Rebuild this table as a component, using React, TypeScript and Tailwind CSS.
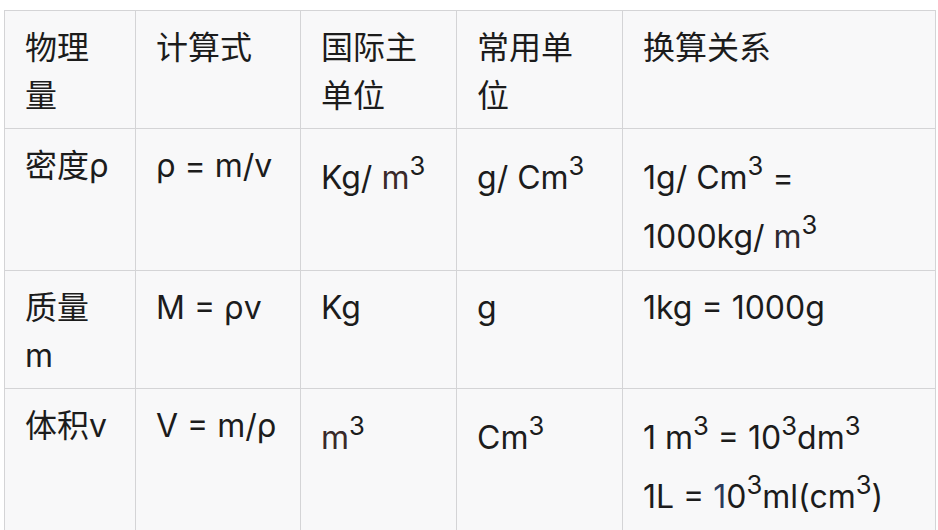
import React from "react";

const cell = "border border-[#d4d4d6] align-top pl-[20px] pr-[10px] whitespace-nowrap";
const plain = "pt-[13px] leading-[48px]";
const tall = "pt-[19px] leading-[59px]";

function Sup({ children }: { children: React.ReactNode }) {
  return <sup className="text-[80%] -top-[0.55em]">{children}</sup>;
}

export default function App() {
  return (
    <div className="min-h-screen bg-white pt-[10px] pl-[4px] text-[#1c1c1c] text-[32px] font-['Inter','Noto_Sans_CJK_SC',sans-serif] overflow-hidden">
      <table className="table-fixed border-collapse bg-[#f8f8f9] w-[931px]">
        <colgroup>
          <col className="w-[131px]" />
          <col className="w-[165px]" />
          <col className="w-[156px]" />
          <col className="w-[166px]" />
          <col className="w-[313px]" />
        </colgroup>
        <tbody>
          <tr className="h-[118px]">
            <td className={`${cell} ${plain}`}>
              物理
              <br />量
            </td>
            <td className={`${cell} ${plain}`}>计算式</td>
            <td className={`${cell} ${plain}`}>
              国际主
              <br />
              单位
            </td>
            <td className={`${cell} ${plain}`}>
              常用单
              <br />位
            </td>
            <td className={`${cell} ${plain}`}>换算关系</td>
          </tr>
          <tr className="h-[142px]">
            <td className={`${cell} ${plain}`}>密度ρ</td>
            <td className={`${cell} ${plain}`}>ρ = m/v</td>
            <td className={`${cell} ${tall}`}>
              Kg/ <span className="text-[#3a2a2a]">m</span>
              <Sup>3</Sup>
            </td>
            <td className={`${cell} ${tall}`}>
              g/ Cm<Sup>3</Sup>
            </td>
            <td className={`${cell} ${tall}`}>
              1g/ Cm<Sup>3</Sup> =
              <br />
              1000kg/ <span className="text-[#2e2a30]">m</span>
              <Sup>3</Sup>
            </td>
          </tr>
          <tr className="h-[118px]">
            <td className={`${cell} ${plain}`}>
              质量
              <br />m
            </td>
            <td className={`${cell} ${plain}`}>M = ρv</td>
            <td className={`${cell} ${plain}`}>Kg</td>
            <td className={`${cell} ${plain}`}>g</td>
            <td className={`${cell} ${plain}`}>1kg = 1000g</td>
          </tr>
          <tr className="h-[150px]">
            <td className={`${cell} ${plain}`}>体积v</td>
            <td className={`${cell} ${plain}`}>V = m/ρ</td>
            <td className={`${cell} ${tall}`}>
              <span className="text-[#3a2a2a]">m</span>
              <Sup>3</Sup>
            </td>
            <td className={`${cell} ${tall}`}>
              Cm<Sup>3</Sup>
            </td>
            <td className={`${cell} ${tall}`}>
              1 m<Sup>3</Sup> = 10<Sup>3</Sup>dm<Sup>3</Sup>
              <br />
              1L = <span className="text-[#2b3a5c]">1</span>0<Sup>3</Sup>ml(cm<Sup>3</Sup>)
            </td>
          </tr>
        </tbody>
      </table>
    </div>
  );
}
